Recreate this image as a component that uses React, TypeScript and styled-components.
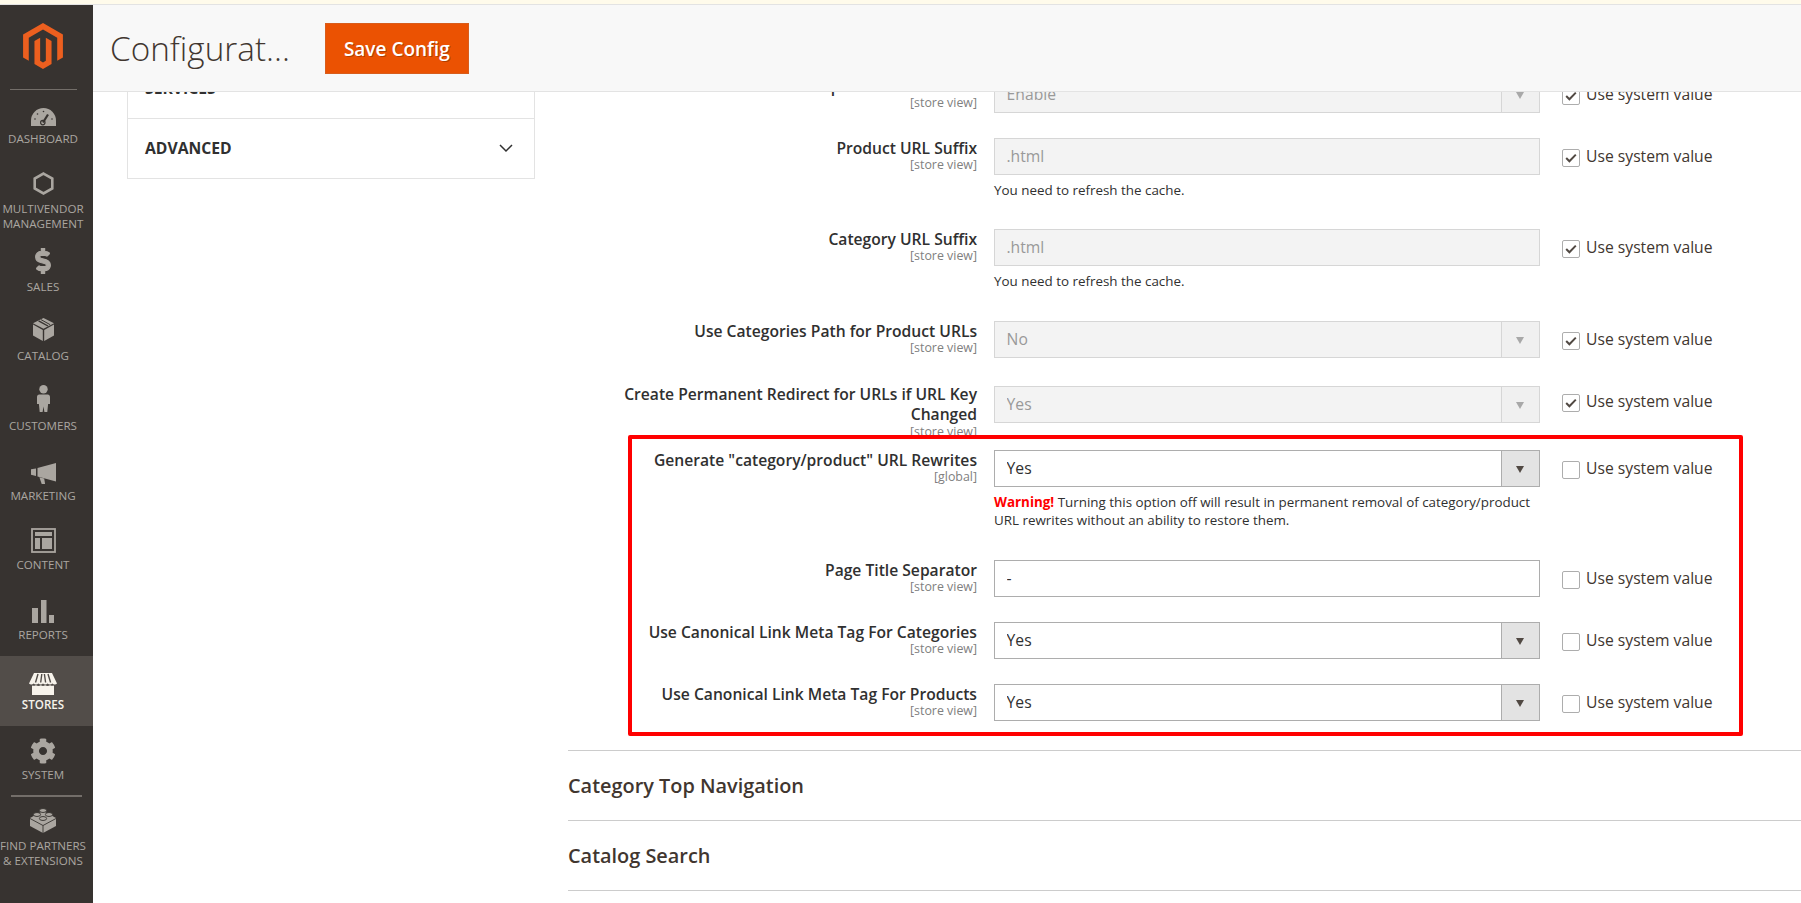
import * as React from "react";
import styled, { createGlobalStyle } from "styled-components";
import { FaCog, FaDollarSign } from "react-icons/fa";
import { SiMagento } from "react-icons/si";

const GlobalStyle = createGlobalStyle`
  html, body {
    margin: 0;
    height: 100%;
    background: #fff;
    overflow: hidden;
  }
  body {
    font-family: "Open Sans", "Liberation Sans", sans-serif;
    color: #303030;
  }
  * {
    box-sizing: border-box;
  }
`;

const Page = styled.div`
  height: 100vh;
  overflow: hidden;
  display: flex;
  flex-direction: column;
`;

const NoticeStrip = styled.div`
  height: 5px;
  flex: none;
  background: #fffbeb;
  border-bottom: 1px solid #e3e3e3;
`;

const Shell = styled.div`
  flex: 1;
  display: flex;
  min-height: 0;
`;

/* sidebar */

const Sidebar = styled.nav`
  width: 93px;
  flex: none;
  background: #373330;
  display: flex;
  flex-direction: column;
`;

const LogoBox = styled.div`
  height: 83.5px;
  flex: none;
  padding: 18px 7px 0 0;
  display: flex;
  justify-content: center;
  color: #ec5f1f;
`;

const MenuRule = styled.div<{ $left: number; $right: number }>`
  height: 1.5px;
  flex: none;
  margin: 0 ${(p) => p.$right}px 0 ${(p) => p.$left}px;
  background: #736e69;
`;

const MenuItem = styled.div<{ $active?: boolean }>`
  min-height: 69.7px;
  padding: 9px 7px 7px 0;
  display: flex;
  flex-direction: column;
  align-items: center;
  background: ${(p) => (p.$active ? "#524d49" : "transparent")};
  color: ${(p) => (p.$active ? "#f7f3eb" : "#aaa6a0")};
`;

const MenuIcon = styled.div<{ $lift?: number }>`
  height: 31px;
  margin-top: ${(p) => -(p.$lift || 0)}px;
  margin-bottom: ${(p) => (p.$lift || 0) + 1}px;
  display: flex;
  align-items: center;
  justify-content: center;
`;

const MenuLabel = styled.div<{ $active?: boolean }>`
  font-size: 11.6px;
  line-height: 15px;
  text-align: center;
  text-transform: uppercase;
  white-space: pre;
  font-weight: ${(p) => (p.$active ? 600 : 400)};
`;

/* header */

const Main = styled.div`
  flex: 1;
  min-width: 0;
  display: flex;
  flex-direction: column;
`;

const Header = styled.header`
  height: 87px;
  flex: none;
  position: relative;
  z-index: 2;
  background: #f8f8f8;
  border-bottom: 1px solid #e3e3e3;
  padding: 18px 0 0 17px;
  display: flex;
  align-items: flex-start;
  gap: 35px;
`;

const Title = styled.h1`
  margin: 0;
  font-size: 33.3px;
  line-height: 50px;
  font-weight: 300;
  color: #41362f;
`;

const SaveButton = styled.button`
  width: 144px;
  height: 51px;
  border: 1px solid #d85d1c;
  background: #eb5202;
  color: #fff;
  font-family: inherit;
  font-size: 19px;
  font-weight: 600;
  text-shadow: 1px 1px 0 rgba(0, 0, 0, 0.25);
  padding: 0;
`;

/* content */

const Body = styled.div`
  flex: 1;
  min-height: 0;
  margin-top: -34.5px;
  display: flex;
  align-items: flex-start;
`;

const TabsColumn = styled.div`
  width: 408px;
  flex: none;
  margin-left: 34px;
  border: 1.5px solid #e3e3e3;
  border-top: 0;
`;

const TabRow = styled.div`
  height: 60px;
  padding: 0 21px 0 17px;
  display: flex;
  align-items: center;
  justify-content: space-between;
  font-size: 15.7px;
  font-weight: 700;
  color: #303030;
  & + & {
    border-top: 1.5px solid #e3e3e3;
  }
`;

const Fields = styled.div`
  flex: 1;
  min-width: 0;
  margin-left: 33px;
  padding-top: 18px;
`;

const Highlight = styled.div`
  position: relative;
  display: flow-root;
  margin-bottom: 4px;
  &::after {
    content: "";
    box-sizing: border-box;
    position: absolute;
    top: -15px;
    bottom: 10px;
    left: 60px;
    width: 1115px;
    border: 4px solid #f00;
    border-radius: 2px;
    pointer-events: none;
  }
`;

const Row = styled.div<{ $extra?: number }>`
  display: grid;
  grid-template-columns: 409px 546px 1fr;
  column-gap: 17px;
  margin-bottom: ${(p) => 25 + (p.$extra || 0)}px;
`;

const LabelCell = styled.div<{ $up?: number }>`
  height: 37px;
  margin-top: ${(p) => -(p.$up || 0)}px;
  padding-left: 40px;
  text-align: right;
  font-size: 15.65px;
  font-weight: 600;
  line-height: 20.5px;
  color: #303030;
`;

const Scope = styled.div`
  font-size: 12.4px;
  font-weight: 400;
  line-height: 16px;
  margin-top: -1px;
  color: #808080;
`;

const ControlCell = styled.div`
  min-width: 0;
`;

const TextBox = styled.input`
  display: block;
  width: 100%;
  height: 37px;
  padding: 0 11.5px;
  border: 1px solid #adadad;
  border-radius: 0;
  background: #fff;
  font-family: inherit;
  font-size: 15.7px;
  color: #303030;
  opacity: 1;
  &:disabled {
    background: #f3f3f3;
    border-color: #d6d6d6;
    color: #999;
    -webkit-text-fill-color: #999;
  }
`;

const SelectWrap = styled.div`
  position: relative;
  height: 37px;
`;

const SelectBox = styled.select`
  display: block;
  width: 100%;
  height: 37px;
  padding: 0 50px 0 11.6px;
  appearance: none;
  border: 1px solid #adadad;
  border-radius: 0;
  background: #fff;
  font-family: inherit;
  font-size: 15.7px;
  color: #303030;
  opacity: 1;
  &:disabled {
    background: #f3f3f3;
    border-color: #d6d6d6;
    color: #999;
  }
`;

const SelectAddon = styled.span<{ $off?: boolean }>`
  position: absolute;
  top: 0;
  right: 0;
  width: 39px;
  height: 37px;
  border: 1px solid ${(p) => (p.$off ? "#d6d6d6" : "#adadad")};
  background: ${(p) => (p.$off ? "#f0f0f0" : "#e3e3e3")};
  pointer-events: none;
  &::after {
    content: "";
    position: absolute;
    top: 15px;
    left: 14px;
    border-style: solid;
    border-width: 7px 4.5px 0;
    border-color: ${(p) => (p.$off ? "#a8a8a8" : "#514943")} transparent transparent;
  }
`;

const Note = styled.p`
  margin: 6px 0 5px;
  font-size: 13.4px;
  line-height: 18px;
  color: #303030;
`;

const WarningWord = styled.strong`
  color: #f00;
  font-weight: 700;
`;

const InheritCell = styled.label<{ $up?: number }>`
  height: 36px;
  margin-top: ${(p) => -(p.$up || 0)}px;
  padding-left: 5px;
  display: flex;
  align-items: center;
  gap: 6px;
  font-size: 15.7px;
  color: #41362f;
`;

const CheckBox = styled.span`
  width: 18px;
  height: 18px;
  flex: none;
  margin-top: 4px;
  border: 1px solid #adadad;
  border-radius: 2px;
  background: #fff;
  display: flex;
  align-items: center;
  justify-content: center;
`;

const SectionHead = styled.div`
  height: 70px;
  border-top: 1.5px solid #ccc;
  display: flex;
  align-items: center;
  font-size: 19.9px;
  font-weight: 600;
  color: #41362f;
`;

/* drawn icons */

const GaugeIcon = () => (
  <svg width="25" height="24" viewBox="0 -6 25 24">
    <path d="M0 18v-5.5a12.5 12.5 0 0 1 25 0V18z" fill="currentColor" />
    <path d="M12 14.5 17 6.5" stroke="#373330" strokeWidth="2.2" />
    <circle cx="11.8" cy="14.6" r="2.2" fill="none" stroke="#373330" strokeWidth="1.2" />
    <g fill="#373330">
      <circle cx="4" cy="11" r=".8" />
      <circle cx="6.5" cy="6" r=".8" />
      <circle cx="12.5" cy="3.5" r=".8" />
      <circle cx="21" cy="11" r=".8" />
    </g>
  </svg>
);

const HexIcon = () => (
  <svg width="21" height="23" viewBox="0 0 21 23">
    <path d="M10.5 1.6 19.3 6.5v10L10.5 21.4 1.7 16.5v-10z" fill="none" stroke="currentColor" strokeWidth="2.6" />
  </svg>
);

const BoxIcon = () => (
  <svg width="21" height="23" viewBox="0 0 21 23" fill="currentColor">
    <path d="M0 6.5 9.8 12v11L0 17.5z" />
    <path d="M21 6.5 11.2 12v11L21 17.5z" />
    <path d="M10.5 0 21 5.2 10.5 10.8 0 5.2z" />
    <path d="M5.6 2.8 15 8" stroke="#373330" strokeWidth="1.4" />
    <path d="M7.8 1.5 17.2 6.7" stroke="#373330" strokeWidth="1" />
  </svg>
);

const PersonIcon = () => (
  <svg width="13" height="27" viewBox="0 0 13 27" fill="currentColor">
    <circle cx="6.5" cy="4.2" r="4.2" />
    <path d="M2.3 9.5h8.4c1.4 0 2.3 1 2.3 2.4V19h-1.9l-.8 8H7.4l-.9-5.5L5.6 27H2.7l-.8-8H0v-7.1c0-1.4.9-2.4 2.3-2.4z" />
  </svg>
);

const MegaphoneIcon = () => (
  <svg width="25" height="21" viewBox="0 0 25 21" fill="currentColor">
    <path d="M6.5 5 25 0v18.5L6.5 13.5z" />
    <path d="M0 6.2 5 5.4v7.6L0 11.8z" />
    <path d="M8.4 14.2l4.8 1.2.9 5.6h-3.4z" />
  </svg>
);

const LayoutIcon = () => (
  <svg width="25" height="25" viewBox="0 0 25 25">
    <rect x="1" y="1" width="23" height="23" fill="none" stroke="currentColor" strokeWidth="1.8" />
    <g fill="currentColor">
      <rect x="4" y="4" width="17" height="4" />
      <rect x="4" y="10" width="5" height="11" />
      <rect x="11" y="10" width="10" height="11" />
    </g>
  </svg>
);

const BarsIcon = () => (
  <svg width="22" height="23" viewBox="0 0 22 23" fill="currentColor">
    <rect x="0" y="8" width="6" height="15" />
    <rect x="9" y="0" width="5.5" height="23" />
    <rect x="17" y="15" width="5" height="8" />
  </svg>
);

const StoreIcon = () => (
  <svg width="28" height="22" viewBox="0 0 28 22">
    <path d="M5 0h18l5 10.5c-1.2 1.4-3.4 1.4-4.7 0-1.2 1.4-3.4 1.4-4.7 0-1.2 1.4-3.4 1.4-4.6 0-1.2 1.4-3.4 1.4-4.6 0-1.3 1.4-3.5 1.4-4.7 0-1.3 1.4-3.5 1.4-4.7 0z" fill="currentColor" />
    <path d="M3 12.5c1.2.6 2.8.4 3.9-.3 1.6 1 3.4 1 5 0 1.4 1 2.8 1 4.2 0 1.6 1 3.4 1 5 0 1 .7 2.6.9 3.9.3V22H3z" fill="currentColor" />
    <path d="M9 1 6.5 9.5M12.8 1 11.7 9.5M15.4 1 16.6 9.5M19 1 21.6 9.5" stroke="#524d49" strokeWidth="1.4" />
  </svg>
);

const BrickIcon = () => (
  <svg width="26" height="26" viewBox="0 0 26 26">
    <path d="M0 11 13 4l13 7v8l-13 7-13-7z" fill="currentColor" />
    <path d="M0 11.5 13 18.5 26 11.5M13 18.5V26" fill="none" stroke="#373330" strokeWidth=".9" />
    <g fill="currentColor" stroke="#373330" strokeWidth=".9">
      <ellipse cx="13" cy="3.5" rx="3.6" ry="2" />
      <ellipse cx="7" cy="7.5" rx="3.6" ry="2" />
      <ellipse cx="19" cy="7.5" rx="3.6" ry="2" />
      <ellipse cx="13" cy="11.5" rx="3.6" ry="2" />
    </g>
  </svg>
);

const ChevronIcon = () => (
  <svg width="14" height="9" viewBox="0 0 14 9">
    <path d="M1 1l6 6 6-6" fill="none" stroke="#303030" strokeWidth="1.5" />
  </svg>
);

const TickIcon = () => (
  <svg width="12" height="10" viewBox="0 0 12 10">
    <path d="M1.2 5 4.4 8.2 10.8 1.6" fill="none" stroke="#514943" strokeWidth="2" />
  </svg>
);

type MenuEntry = { label: string; icon: React.ReactNode; active?: boolean; lift?: number };

const MENU: MenuEntry[] = [
  { label: "Dashboard", icon: <GaugeIcon />, lift: 1 },
  { label: "Multivendor\nManagement", icon: <HexIcon />, lift: 1 },
  { label: "Sales", icon: <FaDollarSign size={26} stroke="currentColor" strokeWidth={24} />, lift: 1.5 },
  { label: "Catalog", icon: <BoxIcon />, lift: 2 },
  { label: "Customers", icon: <PersonIcon />, lift: 3 },
  { label: "Marketing", icon: <MegaphoneIcon />, lift: -2.5 },
  { label: "Content", icon: <LayoutIcon />, lift: 0.5 },
  { label: "Reports", icon: <BarsIcon />, lift: -0.5 },
  { label: "Stores", icon: <StoreIcon />, active: true, lift: -3.5 },
  { label: "System", icon: <FaCog size={26} />, lift: -0.5 },
];

type FieldEntry = {
  label: string;
  scope: string;
  kind: "select" | "text";
  value: string;
  off: boolean;
  note?: React.ReactNode;
  extra?: number;
  up?: number;
};

const REFRESH_NOTE = "You need to refresh the cache.";

const LOCKED_FIELDS: FieldEntry[] = [
  { label: "Popular Search Terms", scope: "[store view]", kind: "select", value: "Enable", off: true },
  { label: "Product URL Suffix", scope: "[store view]", kind: "text", value: ".html", off: true, note: REFRESH_NOTE },
  { label: "Category URL Suffix", scope: "[store view]", kind: "text", value: ".html", off: true, note: REFRESH_NOTE, extra: 1 },
  { label: "Use Categories Path for Product URLs", scope: "[store view]", kind: "select", value: "No", off: true, extra: 3 },
  { label: "Create Permanent Redirect for URLs if URL Key Changed", scope: "[store view]", kind: "select", value: "Yes", off: true, extra: 2, up: 2 },
];

const OPEN_FIELDS: FieldEntry[] = [
  {
    label: 'Generate "category/product" URL Rewrites',
    scope: "[global]",
    kind: "select",
    value: "Yes",
    off: false,
    extra: 1,
    note: (
      <>
        <WarningWord>Warning!</WarningWord> Turning this option off will result in permanent removal of
        category/product URL rewrites without an ability to restore them.
      </>
    ),
  },
  { label: "Page Title Separator", scope: "[store view]", kind: "text", value: "-", off: false },
  { label: "Use Canonical Link Meta Tag For Categories", scope: "[store view]", kind: "select", value: "Yes", off: false },
  { label: "Use Canonical Link Meta Tag For Products", scope: "[store view]", kind: "select", value: "Yes", off: false },
];

function Field({ field }: { field: FieldEntry }) {
  return (
    <Row $extra={field.extra}>
      <LabelCell $up={field.up}>
        {field.label}
        <Scope>{field.scope}</Scope>
      </LabelCell>
      <ControlCell>
        {field.kind === "select" ? (
          <SelectWrap>
            <SelectBox disabled={field.off} defaultValue={field.value}>
              <option>{field.value}</option>
            </SelectBox>
            <SelectAddon $off={field.off} />
          </SelectWrap>
        ) : (
          <TextBox disabled={field.off} defaultValue={field.value} />
        )}
        {field.note && <Note>{field.note}</Note>}
      </ControlCell>
      <InheritCell $up={field.up ? 3 : 0}>
        <CheckBox>{field.off && <TickIcon />}</CheckBox>
        Use system value
      </InheritCell>
    </Row>
  );
}

export default function App() {
  return (
    <Page>
      <GlobalStyle />
      <NoticeStrip />
      <Shell>
        <Sidebar>
          <LogoBox>
            <SiMagento size={46} />
          </LogoBox>
          <MenuRule $left={10} $right={16} />
          {MENU.map((item) => (
            <MenuItem key={item.label} $active={item.active}>
              <MenuIcon $lift={item.lift}>{item.icon}</MenuIcon>
              <MenuLabel $active={item.active}>{item.label}</MenuLabel>
            </MenuItem>
          ))}
          <MenuRule $left={11} $right={11} />
          <MenuItem>
            <MenuIcon $lift={1}>
              <BrickIcon />
            </MenuIcon>
            <MenuLabel>{"Find Partners\n& Extensions"}</MenuLabel>
          </MenuItem>
        </Sidebar>
        <Main>
          <Header>
            <Title>Configurat...</Title>
            <SaveButton>Save Config</SaveButton>
          </Header>
          <Body>
            <TabsColumn>
              <TabRow>SERVICES</TabRow>
              <TabRow>
                ADVANCED
                <ChevronIcon />
              </TabRow>
            </TabsColumn>
            <Fields>
              {LOCKED_FIELDS.map((field) => (
                <Field key={field.label} field={field} />
              ))}
              <Highlight>
                {OPEN_FIELDS.map((field) => (
                  <Field key={field.label} field={field} />
                ))}
              </Highlight>
              <SectionHead>Category Top Navigation</SectionHead>
              <SectionHead>Catalog Search</SectionHead>
              <SectionHead />
            </Fields>
          </Body>
        </Main>
      </Shell>
    </Page>
  );
}
